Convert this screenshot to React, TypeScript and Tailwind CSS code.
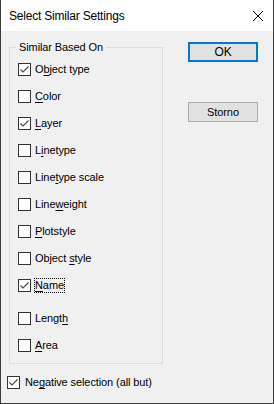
import type { ReactNode } from "react";

const font = { fontFamily: '"Segoe UI", "Liberation Sans", Arial, sans-serif' };

function Box({ checked }: { checked?: boolean }) {
  return (
    <span className="flex h-[13px] w-[13px] shrink-0 items-center justify-center border border-[#333] bg-white">
      {checked && (
        <svg width="11" height="11" viewBox="0 0 11 11" fill="none">
          <path d="M1.5 5.5 L4 8 L9.5 2.5" stroke="#444" strokeWidth="1.1" />
        </svg>
      )}
    </span>
  );
}

function U({ children }: { children: ReactNode }) {
  return <span className="underline underline-offset-[2px]">{children}</span>;
}

function Row({
  checked,
  children,
  focus,
  className = "",
}: {
  checked?: boolean;
  children: ReactNode;
  focus?: boolean;
  className?: string;
}) {
  return (
    <div className={"flex h-[13px] items-center gap-[3px] " + className}>
      <Box checked={checked} />
      <span
        className={
          "whitespace-nowrap leading-[13px] " +
          (focus ? "border border-dotted border-black" : "border border-transparent")
        }
      >
        {children}
      </span>
    </div>
  );
}

export default function App() {
  return (
    <div
      className="flex h-[404px] w-[274px] flex-col border-x border-b border-[#3c3c3c] bg-[#f0f0f0] text-[11px] tracking-[-0.1px] text-black"
      style={font}
    >
      <div className="flex h-[31px] shrink-0 items-center justify-between bg-white pl-[8px] pr-[9px]">
        <span className="text-[12px] tracking-[-0.2px]">Select Similar Settings</span>
        <svg width="12" height="12" viewBox="0 0 12 12" fill="none">
          <path d="M1 1 L11 11 M11 1 L1 11" stroke="#000" strokeWidth="1" />
        </svg>
      </div>

      <div className="flex flex-1">
        <div className="flex flex-col">
          <fieldset className="relative ml-[8px] mt-[16px] h-[317px] w-[154px] border border-[#dcdcdc] pl-[8px] pt-[15px]">
            <span className="absolute left-[6px] top-[-9px] bg-[#f0f0f0] px-[3px] leading-[16px]">
              Similar Based On
            </span>
            <div className="flex flex-col gap-[14px]">
              <Row checked>
                O<U>b</U>ject type
              </Row>
              <Row>
                <U>C</U>olor
              </Row>
              <Row checked>
                <U>L</U>ayer
              </Row>
              <Row>
                L<U>i</U>netype
              </Row>
              <Row>
                Line<U>t</U>ype scale
              </Row>
              <Row>
                Line<U>w</U>eight
              </Row>
              <Row>
                <U>P</U>lotstyle
              </Row>
              <Row>
                Object <U>s</U>tyle
              </Row>
              <Row checked focus>
                <U>N</U>ame
              </Row>
              <Row className="mt-[6px]">
                Lengt<U>h</U>
              </Row>
              <Row>
                <U>A</U>rea
              </Row>
            </div>
          </fieldset>
          <div className="ml-[6px] mt-[12px]">
            <Row checked className="gap-[4px]">
              Ne<U>g</U>ative selection (all but)
            </Row>
          </div>
        </div>

        <div className="ml-[25px] mt-[11px] flex flex-col gap-[40px]">
          <button className="h-[20px] w-[70px] border-2 border-[#0078d7] bg-[#e1e1e1] text-[12px] leading-[14px]">
            OK
          </button>
          <button className="h-[20px] w-[70px] border border-[#adadad] bg-[#e1e1e1] leading-[16px]">
            Storno
          </button>
        </div>
      </div>
    </div>
  );
}
